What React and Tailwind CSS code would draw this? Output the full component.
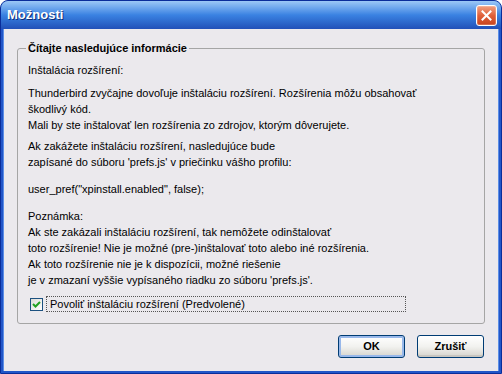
import React from 'react';

const font = { fontFamily: '"Liberation Sans", Arial, sans-serif' };

const CloseButton = () => (
  <div className="w-[21px] h-[21px] rounded-[3px] border border-white bg-gradient-to-b from-[#f0a080] via-[#e0603a] to-[#c8441e] flex items-center justify-center shadow-[inset_0_0_0_1px_rgba(255,255,255,0.2)]">
    <svg width="11" height="11" viewBox="0 0 11 11">
      <path d="M1.5 1.5 L9.5 9.5 M9.5 1.5 L1.5 9.5" stroke="#fff" strokeWidth="2" strokeLinecap="square" />
    </svg>
  </div>
);

const Checkbox = () => (
  <div className="w-[13px] h-[13px] border border-[#1c5180] bg-gradient-to-br from-[#dcdcd7] to-white flex items-center justify-center">
    <svg width="9" height="9" viewBox="0 0 9 9">
      <path d="M1 4 L3.5 6.5 L8 2" stroke="#21a121" strokeWidth="2" fill="none" />
    </svg>
  </div>
);

const XpButton = ({ children, isDefault }) => (
  <button
    type="button"
    className={`w-[67px] h-[23px] rounded-[3px] border text-[11px] font-bold text-black bg-gradient-to-b from-white via-[#f2f2ef] to-[#d6d4cd] ${
      isDefault
        ? 'border-[#003c74] shadow-[inset_0_0_0_2px_#98b8ea]'
        : 'border-[#003c74] shadow-[inset_0_-2px_0_0_#c8c6c0]'
    }`}
  >
    {children}
  </button>
);

export default function App() {
  return (
    <div className="w-[502px] h-[374px] bg-white" style={font}>
      <div className="w-[502px] h-[374px] rounded-t-[8px] bg-[#2256c8] border border-[#0a2d9a] flex flex-col overflow-hidden">
        {/* Title bar */}
        <div className="h-[28px] shrink-0 flex items-center justify-between pl-[6px] pr-[4px] bg-gradient-to-b from-[#9cc8f6] via-[#3a82e2] to-[#2250b8]">
          <span className="text-white font-bold text-[13px] [text-shadow:1px_1px_0_#0f2f78]">Možnosti</span>
          <CloseButton />
        </div>

        {/* Body */}
        <div className="flex-1 mx-[2px] mb-[2px] bg-[#ebe9ed] border-l border-r border-[#5b8ee6] text-[11px] text-black">
          <fieldset className="mt-[12px] ml-[13px] w-[468px] h-[283px] border border-[#a5a5a5] rounded-[3px] pl-[10px]">
            <legend className="ml-[-2px] px-[2px] font-bold text-[11px] leading-[14px]">Čítajte nasledujúce informácie</legend>
            <div className="leading-[16px]">
              <p className="mt-[7px]">Inštalácia rozšírení:</p>
              <p className="mt-[7px]">
                Thunderbird zvyčajne dovoľuje inštaláciu rozšírení. Rozšírenia môžu obsahovať
                <br />
                škodlivý kód.
                <br />
                Mali by ste inštalovať len rozšírenia zo zdrojov, ktorým dôverujete.
              </p>
              <p className="mt-[5px]">
                Ak zakážete inštaláciu rozšírení, nasledujúce bude
                <br />
                zapísané do súboru 'prefs.js' v priečinku vášho profilu:
              </p>
              <p className="mt-[11px]">user_pref("xpinstall.enabled", false);</p>
              <p className="mt-[11px]">
                Poznámka:
                <br />
                Ak ste zakázali inštaláciu rozšírení, tak nemôžete odinštalovať
                <br />
                toto rozšírenie! Nie je možné (pre-)inštalovať toto alebo iné rozšírenia.
                <br />
                Ak toto rozšírenie nie je k dispozícii, možné riešenie
                <br />
                je v zmazaní vyššie vypísaného riadku zo súboru 'prefs.js'.
              </p>
              <label className="mt-[8px] ml-[2px] flex items-center gap-[3px]">
                <Checkbox />
                <span className="w-[360px] h-[16px] px-[3px] border border-dotted border-[#555] leading-[14px]">
                  Povoliť inštaláciu rozšírení (Predvolené)
                </span>
              </label>
            </div>
          </fieldset>

          <div className="mt-[11px] mr-[14px] flex justify-end gap-[12px]">
            <XpButton isDefault>OK</XpButton>
            <XpButton>Zrušiť</XpButton>
          </div>
        </div>
      </div>
    </div>
  );
}
